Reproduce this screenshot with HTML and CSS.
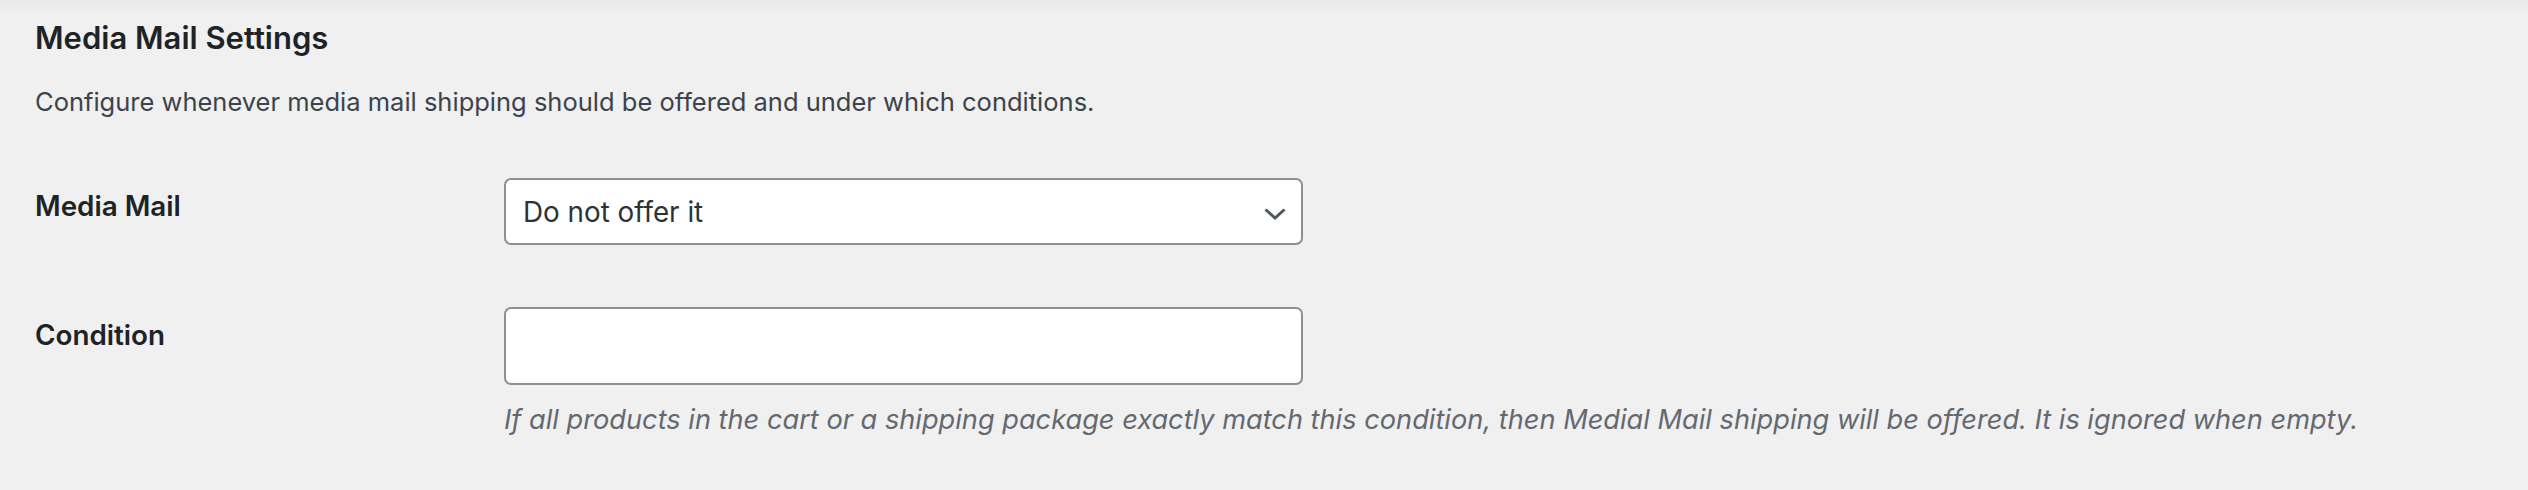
FILE: index.html
```html
<!DOCTYPE html>
<html lang="en">
<head>
<meta charset="utf-8">
<title>Media Mail Settings</title>
<link rel="stylesheet" href="styles.css">
</head>
<body>
<div class="page">
  <h2 class="title">Media Mail Settings</h2>
  <p class="intro">Configure whenever media mail shipping should be offered and under which conditions.</p>
  <div class="form">
    <div class="label">Media Mail</div>
    <div class="field">
      <div class="select">
        <span class="select-value">Do not offer it</span>
        <svg class="chevron" width="22" height="12" viewBox="0 0 22 12"><polyline points="1.5,1.5 11,10 20.5,1.5" fill="none" stroke="#50575e" stroke-width="3"/></svg>
      </div>
    </div>
    <div class="label">Condition</div>
    <div class="field">
      <div class="input"></div>
      <p class="help">If all products in the cart or a shipping package exactly match this condition, then Medial Mail shipping will be offered. It is ignored when empty.</p>
    </div>
  </div>
</div>
</body>
</html>
```
FILE: styles.css
```css
html, body {
  margin: 0;
  padding: 0;
}
body {
  background: linear-gradient(#e8e8e9 0px, #f0f0f1 14px) #f0f0f1;
  font-family: Inter, "Noto Sans", sans-serif;
  color: #1d2327;
  height: 490px;
  overflow: hidden;
}
.page {
  padding: 18px 0 0 35px;
}
.title {
  margin: 0;
  font-size: 31px;
  line-height: 40px;
  font-weight: 600;
  color: #1d2327;
}
.intro {
  margin: 28px 0 0 0;
  font-size: 25.5px;
  line-height: 32px;
  color: #3c434a;
}
.form {
  margin-top: 60px;
  display: grid;
  grid-template-columns: 469px 1fr;
  row-gap: 62px;
}
.label {
  padding-top: 10px;
  font-size: 27.8px;
  line-height: 36px;
  font-weight: 600;
  color: #1d2327;
}
.select {
  box-sizing: border-box;
  width: 799px;
  height: 67px;
  border: 2px solid #8c8f94;
  border-radius: 7px;
  background: #fff;
  display: flex;
  align-items: center;
  justify-content: space-between;
  padding: 0 15px 0 17px;
}
.select-value {
  font-size: 27.8px;
  color: #2c3338;
}
.chevron {
  display: block;
  margin-top: 4px;
}
.input {
  box-sizing: border-box;
  width: 799px;
  height: 78px;
  border: 2px solid #8c8f94;
  border-radius: 7px;
  background: #fff;
}
.help {
  margin: 17px 0 0 0;
  font-size: 27.2px;
  line-height: 36px;
  font-style: italic;
  color: #646970;
}
```
